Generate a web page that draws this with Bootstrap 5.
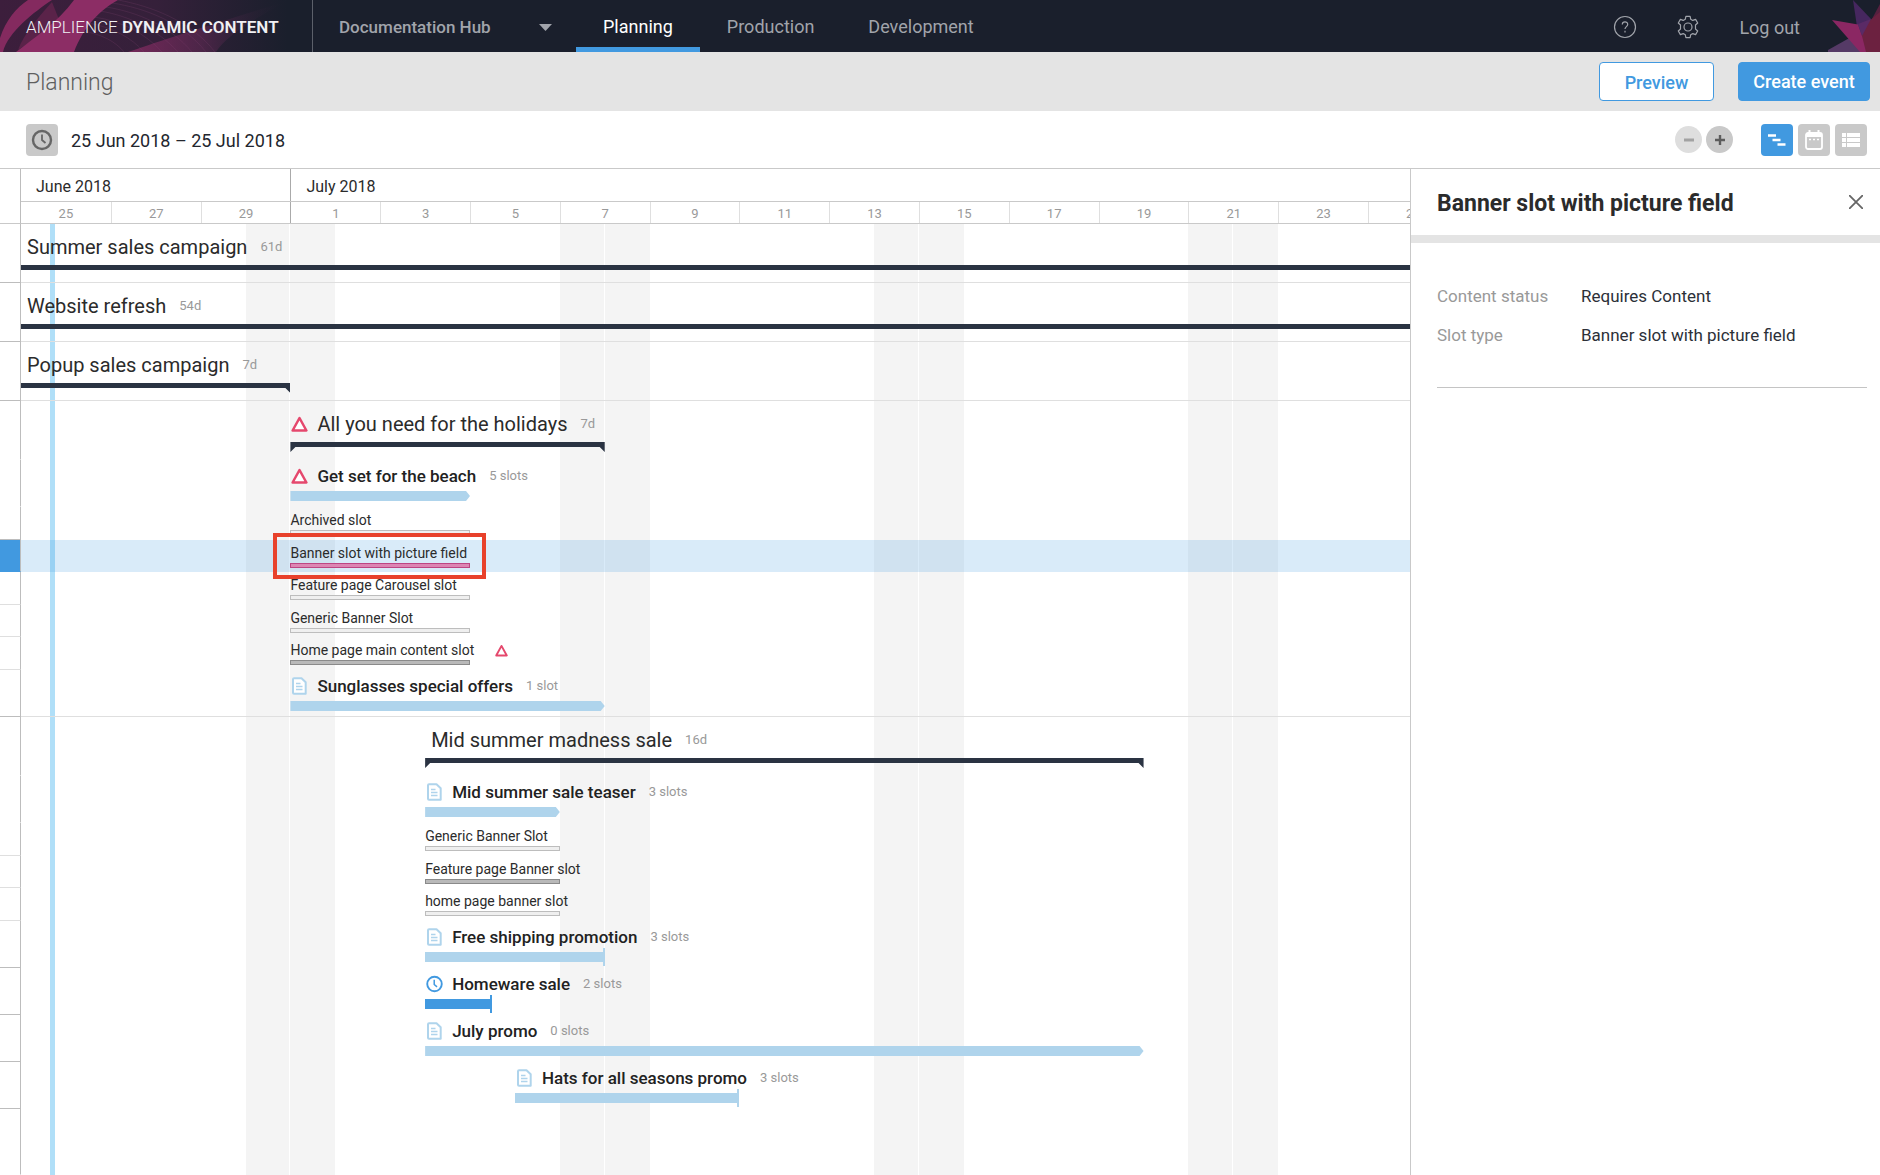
<!DOCTYPE html>
<html lang="en">
<head>
<meta charset="utf-8">
<meta name="viewport" content="width=device-width, initial-scale=1">
<title>Planning – Amplience Dynamic Content</title>
<link href="https://cdn.jsdelivr.net/npm/bootstrap@5.3.0/dist/css/bootstrap.min.css" rel="stylesheet">
<style>
:root{--blue:#4199e0;--sky:#afd4ec;--ink:#2b2b2b;--dark:#2a3342;--rule:#c9c9c9;--soft:#dfdfdf}
body{font-family:Roboto,"Liberation Sans",sans-serif;color:var(--ink);background:#fff;font-size:17px;line-height:24px}
/* top bar */
.topbar{height:52px;background:#1a1f2c;color:#a1a4ab;font-size:18px}
.topbar a{color:inherit;text-decoration:none}
.brand-cell{width:313px;border-right:1px solid #5c606a;display:grid;align-items:center;overflow:hidden}
.brand-cell > *{grid-area:1/1}
.topbar .brand-name{padding:2px 0 0 26px;font-size:17px;font-weight:300;color:#f0f0f3;white-space:nowrap}
.brand-name b{font-weight:600}
.hub{width:263px;display:grid;align-items:center;padding:2px 24px 0 26px}
.hub > *{grid-area:1/1}
.hub select{appearance:none;border:0;background:transparent;color:#a1a4ab;font-size:17px;font-weight:500;padding:0;width:100%}
.hub svg{justify-self:end;pointer-events:none}
.tab{padding:6px 27px 0;height:52px;display:flex;align-items:center;border-bottom:5px solid transparent}
.topbar .tab.active{color:#fff;border-color:var(--blue)}
.tail{gap:39px;height:52px}
.tail a{padding-top:3px}
.tail .icon-btn{padding-top:2px}
.icon-btn{border:0;background:transparent;padding:0;display:flex;color:#a1a4ab}
/* title bar */
.titlebar{height:59px;background:#e4e4e4;padding:0 10px 0 26px}
.titlebar h1{font-size:23px;font-weight:300;line-height:28px;color:#5f5f5f;margin:0;padding-top:2px}
.act{height:39px;border-radius:4px;font-size:18px;font-weight:500;line-height:24px;padding:0;border:1px solid var(--blue)}
.act-line,.act-line:hover{background:#fff;color:var(--blue);width:115px;padding-top:2px}
.act-fill,.act-fill:hover{background:var(--blue);color:#fff;width:132px}
/* tools */
.tools{height:58px;border-bottom:1px solid var(--rule);padding:0 13px 0 26px;font-size:18px;color:#23262e}
.sq{width:32px;height:32px;border:0;border-radius:4px;background:#c9c9c9;padding:0;display:grid;place-items:center}
.sq.on{background:var(--blue)}
.views{gap:5px}
.span-text{padding:2px 0 0 13px}
.rd{width:27px;height:27px;border:0;border-radius:50%;background:#c9c9c9;padding:0;display:grid;place-items:center}
.rd:disabled{background:#dedede}
/* planner */
.planner{min-width:0;overflow:hidden;position:relative}
.strip{display:flex}
.gut{flex:none;width:21px;border-right:1px solid #bdbdbd;border-bottom:1px solid transparent}
.gut.hd{border-bottom-color:var(--rule)}
.gut.ln{border-bottom-color:#bdbdbd}
.gut.lt{border-bottom-color:var(--soft)}
.lane,.backdrop{flex:none;width:calc(100% - 18px)}
.lane{position:relative}
.ln-row > .lane{border-bottom:1px solid var(--soft)}
.months{height:33px;font-size:16px;border-bottom:1px solid var(--rule)}
.months div{padding-left:15px;flex:none;line-height:36px;width:calc(100% / 31 * var(--n))}
.months div + div{border-left:1px solid #aaa}
.days{height:22px;font-size:13px;color:#999;border-bottom:1px solid var(--rule)}
.days span{flex:none;width:calc(100% / 31 * 2);text-align:center;line-height:23px}
.days span + span{border-left:1px solid var(--soft)}
.days span:nth-child(4){border-left-color:#aaa}
.sheet{position:relative}
.backdrop{position:absolute;top:0;bottom:0;left:21px}
.wkend{position:absolute;top:0;bottom:0;left:calc(100% / 31 * var(--s));width:calc(100% / 31 * 2);background:linear-gradient(90deg,#f4f4f4 calc(50% - 1px),#fff 0,#fff 50%,#f4f4f4 0)}
.today{position:absolute;top:0;bottom:0;left:29px;width:5px;background:#b0dff8}
.bar{width:calc(100% / 31 * var(--n));margin-left:calc(100% / 31 * var(--s))}
.cap{margin-left:calc(100% / 31 * var(--s));display:flex;align-items:center;white-space:nowrap}
.cap svg{flex:none}
.camp .cap svg,.evt .cap svg{margin:0 9px 0 1px}
.camp{height:59px}
.camp .cap{height:41px;font-size:20px;padding-top:4px}
.camp .cap > .txt:first-child{padding-left:6px}
.camp .bar{height:5px;background:var(--dark)}
.camp .hook{height:10px;clip-path:polygon(0 0,100% 0,100% 10px,calc(100% - 5px) 5px,5px 5px,0 10px)}
.camp .hook-r{height:10px;clip-path:polygon(0 0,100% 0,100% 10px,calc(100% - 5px) 5px,0 5px)}
.meta{font-size:13px;color:#999;margin-left:13px;font-weight:400}
.evt{height:47px}
.evt .cap{height:31px;font-size:17px;font-weight:500;color:#222}
.evt .bar{height:10px;background:var(--sky)}
.evt .arrow{clip-path:polygon(0 0,calc(100% - 4px) 0,100% 50%,calc(100% - 4px) 100%,0 100%)}
.evt .stop{position:relative}
.evt .stop::after{content:"";position:absolute;right:0;top:-4px;width:2px;height:18px;background:inherit}
.evt .live{background:var(--blue)}
.slots .strip{height:33px}
.slots .strip:nth-child(even){height:32px}
.slots .cap{height:23px;font-size:14px;padding-top:3px}
.slots .cap svg{margin-left:21px}
.slots .bar{height:5px;border:1px solid #bdbdbd;background:#efefef}
.slots .full{border-color:#8a8a8a;background:#b9b9b9}
.picked .gut{background:var(--blue)}
.picked .lane{background:rgba(65,153,224,.2)}
.slots .picked .bar{border-color:#bd4683;background:#dd86b3}
.callout-box{position:absolute;z-index:2;top:-7px;bottom:-7px;left:calc(100% / 31 * var(--s) - 17px);width:213px;border:4px solid #e8412b}
/* detail panel */
.detail{border-left:1px solid var(--rule)}
.detail-head{height:74px;border-bottom:8px solid #e4e4e4;padding:0 17px 0 26px}
.detail-head h2{font-size:23px;line-height:28px;font-weight:700;margin:0;padding-top:4px}
.facts{margin:41px 13px 0 26px;padding-bottom:40px;border-bottom:1px solid #c4c4c4;display:grid;grid-template-columns:144px 1fr;row-gap:15px;font-size:17px}
.facts dt{font-weight:400;color:#999}
.facts dd{margin:0;color:#2c3038}
</style>
<script src="https://cdn.jsdelivr.net/npm/bootstrap@5.3.0/dist/js/bootstrap.bundle.min.js"></script>
</head>
<body class="d-flex flex-column min-vh-100">

<svg width="0" height="0" class="position-absolute" aria-hidden="true">
  <symbol id="i-warn" viewBox="0 0 17 16"><path d="M8.500 2L15.400 14.500H1.600Z" fill="#fff" stroke="#e5486d" stroke-width="2.500" stroke-linejoin="round"/></symbol>
  <symbol id="i-doc" viewBox="0 0 16 18"><path d="M2.500 1.200h7.500l4.200 4v11.500h-11.700q-1 0-1-1v-13.500q0-1 1-1z" fill="#fff" stroke="#afd4ec" stroke-width="2" stroke-linejoin="round"/><path d="M4.500 6.500h4.500M4.500 9.500h6.500M4.500 12.500h6.500" stroke="#afd4ec" stroke-width="1.400"/></symbol>
  <symbol id="i-time" viewBox="0 0 18 18"><circle cx="9" cy="9" r="7.700" fill="#fff" stroke="#4199e0" stroke-width="2"/><path d="M8.700 4.500v5l3 2.500" fill="none" stroke="#4199e0" stroke-width="1.600"/></symbol>
</svg>

<nav class="topbar d-flex" aria-label="Main">
  <div class="brand-cell">
    <svg width="312" height="52" viewBox="0 0 312 52" aria-hidden="true">
      <defs>
        <linearGradient id="bg1"><stop offset="0" stop-color="#3c1e3c"/><stop offset=".5" stop-color="#35203a"/><stop offset=".92" stop-color="#1a1f2c"/></linearGradient>
        <linearGradient id="bg2"><stop offset="0" stop-color="#8e2c66"/><stop offset=".45" stop-color="#5a2850"/><stop offset="1" stop-color="#1a1f2c" stop-opacity="0"/></linearGradient>
      </defs>
      <rect width="312" height="52" fill="url(#bg1)"/>
      <path d="M28 0H52C34 12 8 32 3 52H0V38C6 20 16 8 28 0Z" fill="#842a5f"/>
      <path d="M52 2C36 20 24 34 18 50L60 22Z" fill="#5a2349"/>
      <path d="M74 0H118C100 10 84 26 74 52H16C34 38 58 22 74 0Z" fill="#8c2d65"/>
      <path d="M128 52C168 38 220 22 290 0C252 20 226 36 216 52Z" fill="url(#bg2)" opacity=".7"/>
      <g fill="none" stroke="#8a4a78" stroke-opacity=".3" stroke-width=".7"><path d="M118 0C150 6 190 20 215 52"/><path d="M112 3C145 8 182 22 206 52"/><path d="M106 7C138 12 170 26 192 52"/><path d="M100 11C130 16 158 30 178 52"/><path d="M94 17C122 21 146 34 162 52"/><path d="M88 23C112 27 132 38 144 52"/><path d="M82 31C102 34 116 42 124 52"/></g>
    </svg>
    <a class="brand-name" href="#">AMPLIENCE <b>DYNAMIC CONTENT</b></a>
  </div>
  <div class="hub">
    <select aria-label="Hub"><option>Documentation Hub</option></select>
    <svg width="13" height="7" viewBox="0 0 13 7" aria-hidden="true"><path d="M0 0h13L6.500 7z" fill="#a1a4ab"/></svg>
  </div>
  <a class="tab active" href="#" aria-current="page">Planning</a>
  <a class="tab" href="#">Production</a>
  <a class="tab" href="#">Development</a>
  <div class="tail ms-auto d-flex align-items-center">
    <button class="icon-btn" type="button" aria-label="Help"><svg width="24" height="24" viewBox="0 0 24 24" fill="none" stroke="currentColor" stroke-width="1.200"><circle cx="12" cy="12" r="10.500"/><path d="M9.300 9.600c0-3.500 5.400-3.500 5.400-.2 0 2.200-2.700 2.200-2.700 4.600"/><path d="M12 15.800v1.600"/></svg></button>
    <button class="icon-btn" type="button" aria-label="Settings"><svg width="24" height="24" viewBox="0 0 24 24" fill="none" stroke="currentColor" stroke-width="1.200" stroke-linejoin="round"><circle cx="12" cy="12" r="4"/><path d="M9.900 1.300h4.200l.6 2.900 2.100 1.200 2.800-1 2.100 3.600-2.200 2v4l2.200 2-2.100 3.600-2.800-1-2.100 1.200-.6 2.900H9.900l-.6-2.900-2.100-1.200-2.800 1-2.100-3.600 2.200-2v-4l-2.200-2 2.100-3.600 2.800 1 2.100-1.200z"/></svg></button>
    <div class="d-flex align-items-center">
      <a href="#">Log out</a>
      <svg class="ms-4 ps-1" width="56" height="52" viewBox="0 0 52 52" aria-hidden="true"><path d="M0 50L25 36L34 52H0Z" fill="#553a66"/><path d="M52 4L38 30L52 40Z" fill="#56203f"/><path d="M25 0L43 19L31 40Z" fill="#46275f"/><path d="M40 22L52 12V52H34L30 40Z" fill="#6c2140"/><path d="M4 20L30 24.500L34 36L38 52H32Z" fill="#8b2763"/><path d="M30 24L43 19L34 36Z" fill="#5a2a66"/></svg>
    </div>
  </div>
</nav>

<header class="titlebar d-flex align-items-center">
  <h1>Planning</h1>
  <button type="button" class="btn act act-line ms-auto">Preview</button>
  <button type="button" class="btn act act-fill ms-4">Create event</button>
</header>

<div class="tools d-flex align-items-center">
  <button class="sq" type="button" aria-label="Choose time range"><svg width="22" height="22" viewBox="0 0 22 22" fill="none" stroke="#666"><circle cx="11" cy="11" r="9" stroke-width="2.400"/><path d="M11 5.500V11l3.500 3" stroke-width="1.800"/></svg></button>
  <span class="span-text">25 Jun 2018 – 25 Jul 2018</span>
  <div class="ms-auto d-flex align-items-center gap-1">
    <button class="rd" type="button" aria-label="Zoom out" disabled><svg width="10" height="10"><path d="M0 5h10" stroke="#a2a2a2" stroke-width="3"/></svg></button>
    <button class="rd" type="button" aria-label="Zoom in"><svg width="10" height="10"><path d="M0 5h10M5 0v10" stroke="#5c5c5c" stroke-width="2.400"/></svg></button>
  </div>
  <div class="views d-flex ms-4 ps-1">
    <button class="sq on" type="button" aria-label="Timeline view"><svg width="18" height="12"><path d="M0 1.500h8M4.500 6h8M9.500 10.500h8" stroke="#fff" stroke-width="2.400"/></svg></button>
    <button class="sq" type="button" aria-label="Calendar view"><svg width="20" height="20" viewBox="0 0 20 20"><rect x="2" y="3" width="16" height="16" rx="2" fill="none" stroke="#fff" stroke-width="1.800"/><path d="M2 3h16v4H2zM4.500 0h2v3h-2zM13.500 0h2v3h-2z" fill="#fff"/><path d="M5 9.500h2M9 9.500h2M13 9.500h2" stroke="#fff" stroke-width="1.600"/></svg></button>
    <button class="sq" type="button" aria-label="List view"><svg width="18" height="14"><path d="M0 2h4M5 2h13M0 7h4M5 7h13M0 12h4M5 12h13" stroke="#fff" stroke-width="4"/></svg></button>
  </div>
</div>

<div class="d-flex flex-grow-1">
  <main class="planner flex-grow-1 d-flex flex-column">
    <div class="strip">
      <div class="gut hd"></div>
      <div class="lane">
        <div class="months d-flex"><div style="--n:6">June 2018</div><div style="--n:25">July 2018</div></div>
        <div class="days d-flex"><span>25</span><span>27</span><span>29</span><span>1</span><span>3</span><span>5</span><span>7</span><span>9</span><span>11</span><span>13</span><span>15</span><span>17</span><span>19</span><span>21</span><span>23</span><span>25</span></div>
      </div>
    </div>
    <div class="sheet flex-grow-1 d-flex flex-column">
      <div class="backdrop">
        <div class="wkend" style="--s:5"></div><div class="wkend" style="--s:12"></div><div class="wkend" style="--s:19"></div><div class="wkend" style="--s:26"></div>
        <div class="today"></div>
      </div>

      <div class="strip camp ln-row"><div class="gut ln"></div><div class="lane" style="--s:0;--n:31"><div class="cap"><span class="txt">Summer sales campaign</span><span class="meta">61d</span></div><div class="bar"></div></div></div>
      <div class="strip camp ln-row"><div class="gut ln"></div><div class="lane" style="--s:0;--n:31"><div class="cap"><span class="txt">Website refresh</span><span class="meta">54d</span></div><div class="bar"></div></div></div>
      <div class="strip camp ln-row"><div class="gut ln"></div><div class="lane" style="--s:0;--n:6"><div class="cap"><span class="txt">Popup sales campaign</span><span class="meta">7d</span></div><div class="bar hook-r"></div></div></div>

      <div class="strip camp"><div class="gut"></div><div class="lane" style="--s:6;--n:7"><div class="cap"><svg width="17" height="16"><use href="#i-warn"/></svg><span class="txt">All you need for the holidays</span><span class="meta">7d</span></div><div class="bar hook"></div></div></div>
      <div class="strip evt"><div class="gut"></div><div class="lane" style="--s:6;--n:4"><div class="cap"><svg width="17" height="16"><use href="#i-warn"/></svg><span class="txt">Get set for the beach</span><span class="meta">5 slots</span></div><div class="bar arrow"></div></div></div>
      <div class="slots">
        <div class="strip"><div class="gut ln"></div><div class="lane" style="--s:6;--n:4"><div class="cap"><span class="txt">Archived slot</span></div><div class="bar"></div></div></div>
        <div class="strip picked"><div class="gut"></div><div class="lane" style="--s:6;--n:4"><div class="cap"><span class="txt">Banner slot with picture field</span></div><div class="bar"></div><div class="callout-box"></div></div></div>
        <div class="strip"><div class="gut lt"></div><div class="lane" style="--s:6;--n:4"><div class="cap"><span class="txt">Feature page Carousel slot</span></div><div class="bar"></div></div></div>
        <div class="strip"><div class="gut lt"></div><div class="lane" style="--s:6;--n:4"><div class="cap"><span class="txt">Generic Banner Slot</span></div><div class="bar"></div></div></div>
        <div class="strip"><div class="gut lt"></div><div class="lane" style="--s:6;--n:4"><div class="cap"><span class="txt">Home page main content slot</span><svg width="13" height="13"><use href="#i-warn"/></svg></div><div class="bar full"></div></div></div>
      </div>
      <div class="strip evt ln-row"><div class="gut ln"></div><div class="lane" style="--s:6;--n:7"><div class="cap"><svg width="17" height="18"><use href="#i-doc"/></svg><span class="txt">Sunglasses special offers</span><span class="meta">1 slot</span></div><div class="bar arrow"></div></div></div>

      <div class="strip camp"><div class="gut"></div><div class="lane" style="--s:9;--n:16"><div class="cap"><span class="txt">Mid summer madness sale</span><span class="meta">16d</span></div><div class="bar hook"></div></div></div>
      <div class="strip evt"><div class="gut"></div><div class="lane" style="--s:9;--n:3"><div class="cap"><svg width="17" height="18"><use href="#i-doc"/></svg><span class="txt">Mid summer sale teaser</span><span class="meta">3 slots</span></div><div class="bar arrow"></div></div></div>
      <div class="slots">
        <div class="strip"><div class="gut lt"></div><div class="lane" style="--s:9;--n:3"><div class="cap"><span class="txt">Generic Banner Slot</span></div><div class="bar"></div></div></div>
        <div class="strip"><div class="gut lt"></div><div class="lane" style="--s:9;--n:3"><div class="cap"><span class="txt">Feature page Banner slot</span></div><div class="bar full"></div></div></div>
        <div class="strip"><div class="gut lt"></div><div class="lane" style="--s:9;--n:3"><div class="cap"><span class="txt">home page banner slot</span></div><div class="bar"></div></div></div>
      </div>
      <div class="strip evt"><div class="gut ln"></div><div class="lane" style="--s:9;--n:4"><div class="cap"><svg width="17" height="18"><use href="#i-doc"/></svg><span class="txt">Free shipping promotion</span><span class="meta">3 slots</span></div><div class="bar stop"></div></div></div>
      <div class="strip evt"><div class="gut ln"></div><div class="lane" style="--s:9;--n:1.48"><div class="cap"><svg width="17" height="18"><use href="#i-time"/></svg><span class="txt">Homeware sale</span><span class="meta">2 slots</span></div><div class="bar stop live"></div></div></div>
      <div class="strip evt"><div class="gut ln"></div><div class="lane" style="--s:9;--n:16"><div class="cap"><svg width="17" height="18"><use href="#i-doc"/></svg><span class="txt">July promo</span><span class="meta">0 slots</span></div><div class="bar arrow"></div></div></div>
      <div class="strip evt"><div class="gut ln"></div><div class="lane" style="--s:11;--n:5"><div class="cap"><svg width="17" height="18"><use href="#i-doc"/></svg><span class="txt">Hats for all seasons promo</span><span class="meta">3 slots</span></div><div class="bar stop"></div></div></div>
      <div class="strip flex-grow-1"><div class="gut"></div></div>
    </div>
  </main>

  <aside class="detail col-3">
    <div class="detail-head d-flex align-items-center justify-content-between">
      <h2>Banner slot with picture field</h2>
      <button class="icon-btn" type="button" aria-label="Close"><svg width="14" height="14"><path d="M0 0l14 14M14 0L0 14" stroke="#666" stroke-width="1.800"/></svg></button>
    </div>
    <dl class="facts">
      <dt>Content status</dt><dd>Requires Content</dd>
      <dt>Slot type</dt><dd>Banner slot with picture field</dd>
    </dl>
  </aside>
</div>
</body>
</html>
